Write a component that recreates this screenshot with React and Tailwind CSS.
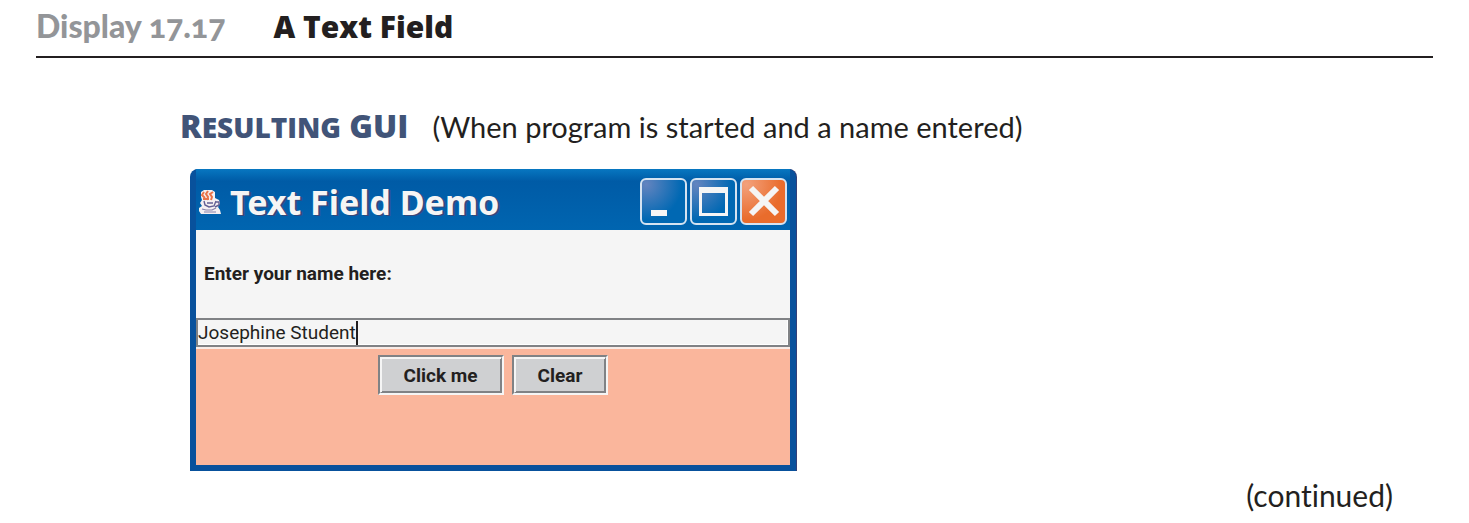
import { useState } from "react";

function JavaIcon() {
  return (
    <svg viewBox="0 0 24 26" className="h-[26px] w-6 shrink-0" aria-hidden="true">
      <path d="M3 3 6 1H14L17 3V9L21 11 22 14 20 18 22 21 23 25H3L1 22V19L4 17 2 14 4 11 3 8Z" fill="#f4eff2" />
      <path d="M6 3 4 6 7 9M10 2 8 5 10 8 9 11M15 3 12 5 14 8 13 11M5 10H11" fill="none" stroke="#e8734a" strokeWidth="2" />
      <path d="M6 12 7 16 11 18 16 17 18 12M9 14H15M18 13H21V16L17 18" fill="none" stroke="#625f94" strokeWidth="1.4" />
      <path d="M4 20 8 21 14 21 18 19M6 23H18" fill="none" stroke="#8581aa" strokeWidth="1.2" />
    </svg>
  );
}

const glyphs = {
  Minimize: <rect x="9" y="30" width="16" height="6" fill="#f5f5f5" />,
  Maximize: (
    <path fillRule="evenodd" d="M7 7H36V36H7ZM10 13V33H33V13Z" fill="#f5f5f5" />
  ),
  Close: <path d="M9 8 35 34M35 8 9 34" stroke="#f5f5f5" strokeWidth="6" />,
};

function CaptionButton({ label, className }) {
  return (
    <button
      type="button"
      aria-label={label}
      className={`h-[47px] w-[47px] rounded-md border-2 border-[#d5e3f1] ${className}`}
    >
      <svg viewBox="0 0 43 43" className="block size-full" aria-hidden="true">
        {glyphs[label]}
      </svg>
    </button>
  );
}

function PushButton({ children, onClick }) {
  return (
    <button
      type="button"
      onClick={onClick}
      className="border-2 border-t-[#808285] border-l-[#808285] border-r-[#f5f5f5] border-b-[#f5f5f5]"
    >
      <span className="block border border-t-[#f5f5f5] border-l-[#f5f5f5] border-r-[#808285] border-b-[#808285] bg-[#cfd0d2] px-[23px] pt-[5px] pb-[3px] text-[19px] leading-[26px] font-bold shadow-[inset_1px_1px_0_#f5f5f5,inset_-1px_-1px_0_#808285]">
        {children}
      </span>
    </button>
  );
}

export default function App() {
  const [name, setName] = useState("Josephine Student");

  return (
    <main className="bg-white px-9 pt-1.5 font-['Lato',sans-serif] text-[#231f20] [font-variant-ligatures:none]">
      <h1 className="flex items-baseline gap-12 border-b-2 border-[#231f20] pb-[9px] leading-10">
        <span className="text-[32px] font-black text-[#939598] oldstyle-nums">Display 17.17</span>
        <span className="font-['Open_Sans',sans-serif] text-[30px] font-extrabold">A Text Field</span>
      </h1>

      <section className="pt-12 pl-36">
        <h2 className="flex items-baseline gap-6 text-[29px] leading-10">
          <span className="font-['Open_Sans',sans-serif] text-[32px] font-extrabold text-[#415478]">
            R<span className="text-[28px]">ESULTING</span> GUI
          </span>
          <span>(When program is started and a name entered)</span>
        </h2>

        <div className="mt-[22px] ml-[10px] w-[606px] rounded-t-lg border-x-[6px] border-b-[6px] border-[#08519c] bg-[#0059a5] font-['Roboto',sans-serif] shadow-[inset_0_3px_2px_#0875bc,1px_0_0_#343f78]">
          <header className="flex h-[61px] items-center bg-linear-to-b from-[#0877c1] via-[#005ba6] via-20% to-[#0065b0] pt-1 pr-[3px] pl-0.5">
            <JavaIcon />
            <h3 className="ml-2 grow font-['Noto_Sans',sans-serif] text-[34px] leading-10 font-bold text-[#f5f5f5] text-shadow-[2px_1px_0_#35477c]">
              Text Field Demo
            </h3>
            <div className="flex gap-[3px]">
              <CaptionButton label="Minimize" className="bg-radial-[at_10%_10%] from-[#6384bf] to-[#0068b3] to-65%" />
              <CaptionButton label="Maximize" className="bg-radial-[at_10%_10%] from-[#6384bf] to-[#0068b3] to-65%" />
              <CaptionButton label="Close" className="bg-radial-[at_10%_10%] from-[#f3a17c] to-[#e96c2c] to-65%" />
            </div>
          </header>

          <div className="bg-[#f5f5f5] px-2 py-[30px] text-[19px] leading-7 font-bold">
            <label htmlFor="name">Enter your name here:</label>
          </div>

          <div className="flex h-[29px] items-center border-2 border-[#808285] bg-[#f5f5f5] shadow-[inset_-1px_-1px_0_white]">
            <input
              id="name"
              value={name}
              onChange={(event) => setName(event.target.value)}
              className="field-sizing-content max-w-full text-[19px] leading-6 caret-transparent outline-none"
            />
            <span className="h-6 w-0.5 bg-[#231f20]" aria-hidden="true" />
          </div>

          <div className="flex h-[118px] items-start justify-center gap-2 border-t-2 border-[#f8ece8] bg-[#fab69c] pt-1.5">
            <PushButton>Click me</PushButton>
            <PushButton onClick={() => setName("")}>Clear</PushButton>
          </div>
        </div>
      </section>

      <p className="pt-1 pr-10 text-right text-[30px] leading-10">(continued)</p>
    </main>
  );
}
